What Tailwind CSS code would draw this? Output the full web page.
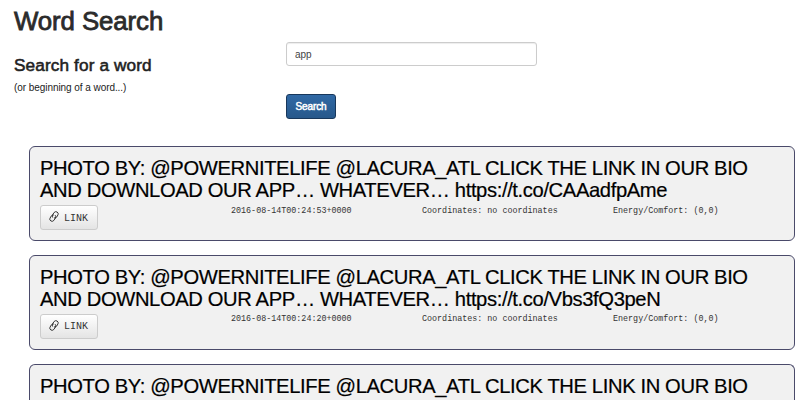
<!DOCTYPE html>
<html lang="en">
<head>
<meta charset="utf-8">
<title>Word Search</title>
<script src="https://cdn.jsdelivr.net/npm/@tailwindcss/browser@4"></script>
</head>
<body class="h-[400px] overflow-hidden bg-white font-['Liberation_Sans',Arial,sans-serif] text-[#333]">
<svg class="hidden">
  <symbol id="link" viewBox="0 0 10 11">
    <g fill="none" stroke="#333" stroke-width="1" stroke-linecap="round" stroke-linejoin="round">
      <path d="M3.5 6.2 Q2.9 5 3.6 3.8 L5.1 1.5 Q6.5 .1 8.1 1 Q9.8 2.1 9 3.8 L7.5 6.3 Q6.6 7.4 5.4 7"/>
      <path d="M6.4 4.5 Q7.2 5.7 6.4 7 L4.9 9.4 Q3.5 10.9 1.9 10 Q.2 8.9 1 7.2 L2.5 4.7 Q3.3 3.6 4.5 3.9"/>
    </g>
  </symbol>
</svg>
<header class="h-[42px] pl-[14px] pt-[7px]">
  <h1 class="whitespace-nowrap text-[25.8px] leading-[29px] tracking-[-0.08px] text-[#2b2b2b] [-webkit-text-stroke:0.8px_#2b2b2b]">Word Search</h1>
</header>
<form class="flex h-[104px] pl-[14px]">
  <div class="w-[272px] shrink-0 pt-[13px]">
    <h2 class="whitespace-nowrap text-[17.2px] leading-[20px] tracking-[0.12px] text-[#222] [-webkit-text-stroke:0.55px_#222]">Search for a word</h2>
    <p class="mt-[7px] whitespace-nowrap text-[10px] leading-[12px] tracking-[-0.06px] text-[#222]">(or beginning of a word...)</p>
  </div>
  <div>
    <input type="text" value="app" class="block h-6 w-[251px] rounded-[3px] border border-[#ccc] bg-white px-[8px] text-[10px] text-[#444] shadow-[inset_0_1px_1px_rgba(0,0,0,0.075)]">
    <button type="button" class="mt-7 block h-[25px] w-[50px] rounded-[3px] border border-[#18375b] bg-linear-to-b from-[#3069a5] to-[#27588b] text-[10px] leading-[23px] tracking-[-0.1px] text-white [-webkit-text-stroke:0.5px_white]">Search</button>
  </div>
</form>
<main class="flex flex-col gap-[13.5px] pl-[28.5px] pr-[5px]">
  <article class="h-[95px] shrink-0 rounded-[6px] border border-[#4a4a6a] bg-[#f1f1f1] px-[10.5px] pt-[9.5px] text-black">
    <h3 class="whitespace-nowrap text-[20.2px] leading-[22px] tracking-[-0.38px] [-webkit-text-stroke:0.2px_black]">PHOTO BY: @POWERNITELIFE @LACURA_ATL CLICK THE LINK IN OUR BIO<br>AND DOWNLOAD OUR APP… WHATEVER… https://t.co/CAAadfpAme</h3>
    <div class="grid grid-cols-[191px_191px_191px_1fr] font-['Liberation_Mono',monospace] text-[8.4px] leading-[10px] text-[#333]">
      <button type="button" class="mt-[4px] flex h-[25px] w-[58px] items-center gap-[5px] rounded-[3px] border border-[#ccc] bg-linear-to-b from-white to-[#e4e4e4] pl-[8px] text-[10px]"><svg class="mb-[2px] h-[11px] w-[10px] shrink-0"><use href="#link"/></svg><span class="pt-[3px]">LINK</span></button>
      <span class="pt-[5px]">2016-08-14T00:24:53+0000</span><span class="pt-[5px]">Coordinates: no coordinates</span><span class="pt-[5px]">Energy/Comfort: (0,0)</span>
    </div>
  </article>
  <article class="h-[95.5px] shrink-0 rounded-[6px] border border-[#4a4a6a] bg-[#f1f1f1] px-[10.5px] pt-[10.5px] text-black">
    <h3 class="whitespace-nowrap text-[20.2px] leading-[22px] tracking-[-0.38px] [-webkit-text-stroke:0.2px_black]">PHOTO BY: @POWERNITELIFE @LACURA_ATL CLICK THE LINK IN OUR BIO<br>AND DOWNLOAD OUR APP… WHATEVER… https://t.co/Vbs3fQ3peN</h3>
    <div class="grid grid-cols-[191px_191px_191px_1fr] font-['Liberation_Mono',monospace] text-[8.4px] leading-[10px] text-[#333]">
      <button type="button" class="mt-[3.5px] flex h-[25px] w-[58px] items-center gap-[5px] rounded-[3px] border border-[#ccc] bg-linear-to-b from-white to-[#e4e4e4] pl-[8px] text-[10px]"><svg class="mb-[1px] h-[11px] w-[10px] shrink-0"><use href="#link"/></svg><span class="pt-[2px]">LINK</span></button>
      <span class="pt-[3.5px]">2016-08-14T00:24:20+0000</span><span class="pt-[3.5px]">Coordinates: no coordinates</span><span class="pt-[3.5px]">Energy/Comfort: (0,0)</span>
    </div>
  </article>
  <article class="h-[37px] shrink-0 overflow-hidden rounded-t-[6px] border border-b-0 border-[#4a4a6a] bg-[#f1f1f1] px-[10.5px] pt-[10.5px] text-black">
    <h3 class="whitespace-nowrap text-[20.2px] leading-[22px] tracking-[-0.38px] [-webkit-text-stroke:0.2px_black]">PHOTO BY: @POWERNITELIFE @LACURA_ATL CLICK THE LINK IN OUR BIO</h3>
  </article>
</main>
</body>
</html>
